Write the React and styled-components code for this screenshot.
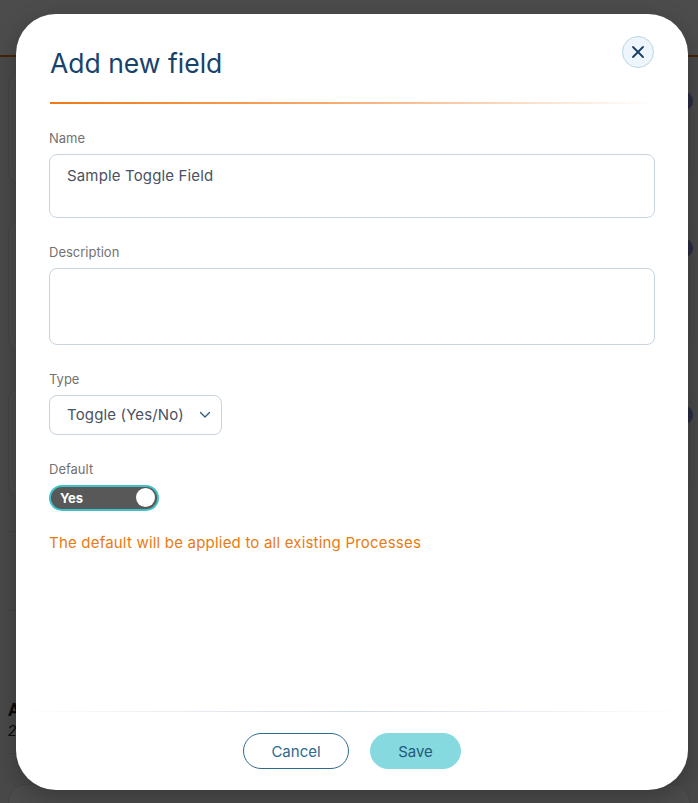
import React from "react";
import styled, { createGlobalStyle } from "styled-components";

const GlobalStyle = createGlobalStyle`
  html, body {
    margin: 0;
    padding: 0;
    width: 698px;
    height: 803px;
    overflow: hidden;
    font-family: Inter, "Noto Sans", sans-serif;
  }
`;

const Page = styled.div`
  width: 698px;
  height: 803px;
  background: #f4f5f7;
  position: relative;
  overflow: hidden;
`;

const TopBar = styled.div`
  height: 55px;
  background: #fff;
  border-bottom: 2px solid #e87b12;
`;

const CardList = styled.div`
  display: flex;
  flex-direction: column;
  gap: 30px;
  padding: 13px 8px 0 8px;
`;

const BgCard = styled.div`
  height: ${(p) => p.$h}px;
  border: 1px solid #e0e3e8;
  border-radius: 18px;
  background: #fff;
  display: flex;
  justify-content: flex-end;
  align-items: flex-start;
  padding: 20px 0 0 0;
`;

const Dot = styled.span`
  width: 20px;
  height: 20px;
  border-radius: 50%;
  background: #8c8fd6;
  margin-right: -4px;
`;

const BgLine = styled.div`
  height: ${(p) => p.$h}px;
  border-top: 1px solid #e0e3e8;
`;

const BgRow = styled.div`
  padding: 8px 0 12px 0;
  border-bottom: 1px solid #e0e3e8;
  font-family: Roboto, sans-serif;
  color: #222;
`;

const BgTitle = styled.div`
  font-weight: 700;
  font-size: 18px;
  line-height: 22px;
`;

const BgSub = styled.div`
  font-style: italic;
  font-size: 15px;
  line-height: 20px;
`;

const Overlay = styled.div`
  position: absolute;
  inset: 0;
  background: rgba(0, 0, 0, 0.7);
  padding: 14px 10px 13px 16px;
  box-sizing: border-box;
  display: flex;
`;

const Modal = styled.div`
  position: relative;
  flex: 1;
  background: #fff;
  border-radius: 40px;
  display: flex;
  flex-direction: column;
  box-shadow: 0 8px 24px rgba(0, 0, 0, 0.25);
`;

const Header = styled.div`
  padding: 34px 34px 0 34px;
`;

const Title = styled.h2`
  margin: 0;
  font-size: 26.5px;
  line-height: 31px;
  font-weight: 400;
  color: #17426a;
`;

const Accent = styled.div`
  margin-top: 23px;
  height: 1.5px;
  background: linear-gradient(90deg, #ee7a17 0%, #f6a86b 45%, rgba(255, 255, 255, 0) 100%);
`;

const CloseButton = styled.button`
  position: absolute;
  top: 22px;
  right: 34px;
  width: 32px;
  height: 32px;
  border-radius: 50%;
  border: 1px solid #b7dae4;
  background: #eff5fc;
  display: flex;
  align-items: center;
  justify-content: center;
  padding: 0;
  cursor: pointer;
`;

const Body = styled.div`
  flex: 1;
  padding: 26px 33px 0 33px;
  display: flex;
  flex-direction: column;
  gap: 26px;
`;

const Field = styled.div`
  display: flex;
  flex-direction: column;
  gap: 8px;
  align-items: flex-start;
`;

const Label = styled.label`
  font-size: 13px;
  line-height: 16px;
  color: #727272;
`;

const TextBox = styled.div`
  box-sizing: border-box;
  width: 100%;
  height: ${(p) => p.$h}px;
  border: 1px solid #c9d4de;
  border-radius: 8px;
  padding: 11px 17px;
  font-size: 15px;
  letter-spacing: 0.15px;
  line-height: 20px;
  color: #4a5262;
`;

const Select = styled.div`
  box-sizing: border-box;
  width: 173px;
  height: 40px;
  border: 1px solid #c9d4de;
  border-radius: 8px;
  padding: 0 10px 0 17px;
  display: flex;
  align-items: center;
  justify-content: space-between;
  font-size: 15px;
  letter-spacing: 0.15px;
  color: #4a5262;
`;

const Toggle = styled.div`
  box-sizing: border-box;
  width: 110px;
  height: 26px;
  border-radius: 13px;
  background: #585858;
  border: 2px solid #3ec2c8;
  display: flex;
  align-items: center;
  justify-content: space-between;
  padding: 0 2px 0 9px;
  color: #fff;
  font-size: 13px;
  font-weight: 700;
`;

const Knob = styled.span`
  width: 19px;
  height: 19px;
  border-radius: 50%;
  background: #fff;
`;

const Note = styled.div`
  margin-top: -4px;
  font-size: 15px;
  letter-spacing: 0.2px;
  line-height: 20px;
  color: #e87b12;
`;

const Footer = styled.div`
  padding: 21px 0 21px 0;
  display: flex;
  justify-content: center;
  gap: 21px;
  border-top: 1px solid transparent;
  border-image: linear-gradient(90deg, rgba(210, 218, 228, 0) 0%, #d3dbe5 50%, rgba(210, 218, 228, 0) 100%) 1;
`;

const Button = styled.button`
  box-sizing: border-box;
  height: 36px;
  width: ${(p) => p.$w}px;
  border-radius: 18px;
  font-family: Inter, sans-serif;
  font-size: 15px;
  cursor: pointer;
  border: 1px solid ${(p) => (p.$primary ? "#86d9df" : "#2d6a8e")};
  background: ${(p) => (p.$primary ? "#86d9df" : "#fff")};
  color: ${(p) => (p.$primary ? "#245a7c" : "#2d6a8e")};
`;

export default function App() {
  return (
    <Page>
      <GlobalStyle />
      <TopBar />
      <CardList>
        <BgCard $h={95}>
          <Dot />
        </BgCard>
        <BgCard $h={115}>
          <Dot />
        </BgCard>
        <BgCard $h={95}>
          <Dot />
        </BgCard>
        <BgLine $h={48} />
        <BgLine $h={50} />
        <BgRow>
          <BgTitle>Archived</BgTitle>
          <BgSub>28 Processes</BgSub>
        </BgRow>
        <BgCard $h={60} />
      </CardList>
      <Overlay>
        <Modal>
          <Header>
            <Title>Add new field</Title>
            <Accent />
          </Header>
          <CloseButton aria-label="Close">
            <svg width="14" height="14" viewBox="0 0 14 14">
              <path d="M2 2 L12 12 M12 2 L2 12" stroke="#173e5f" strokeWidth="1.8" strokeLinecap="round" />
            </svg>
          </CloseButton>
          <Body>
            <Field>
              <Label>Name</Label>
              <TextBox $h={64}>Sample Toggle Field</TextBox>
            </Field>
            <Field>
              <Label>Description</Label>
              <TextBox $h={77} />
            </Field>
            <Field>
              <Label>Type</Label>
              <Select>
                <span>Toggle (Yes/No)</span>
                <svg width="12" height="8" viewBox="0 0 12 8">
                  <path d="M1.5 1.5 L6 6 L10.5 1.5" fill="none" stroke="#2d5a7c" strokeWidth="1.3" strokeLinecap="round" strokeLinejoin="round" />
                </svg>
              </Select>
            </Field>
            <Field>
              <Label>Default</Label>
              <Toggle>
                <span>Yes</span>
                <Knob />
              </Toggle>
            </Field>
            <Note>The default will be applied to all existing Processes</Note>
          </Body>
          <Footer>
            <Button $w={106}>Cancel</Button>
            <Button $w={91} $primary>
              Save
            </Button>
          </Footer>
        </Modal>
      </Overlay>
    </Page>
  );
}
